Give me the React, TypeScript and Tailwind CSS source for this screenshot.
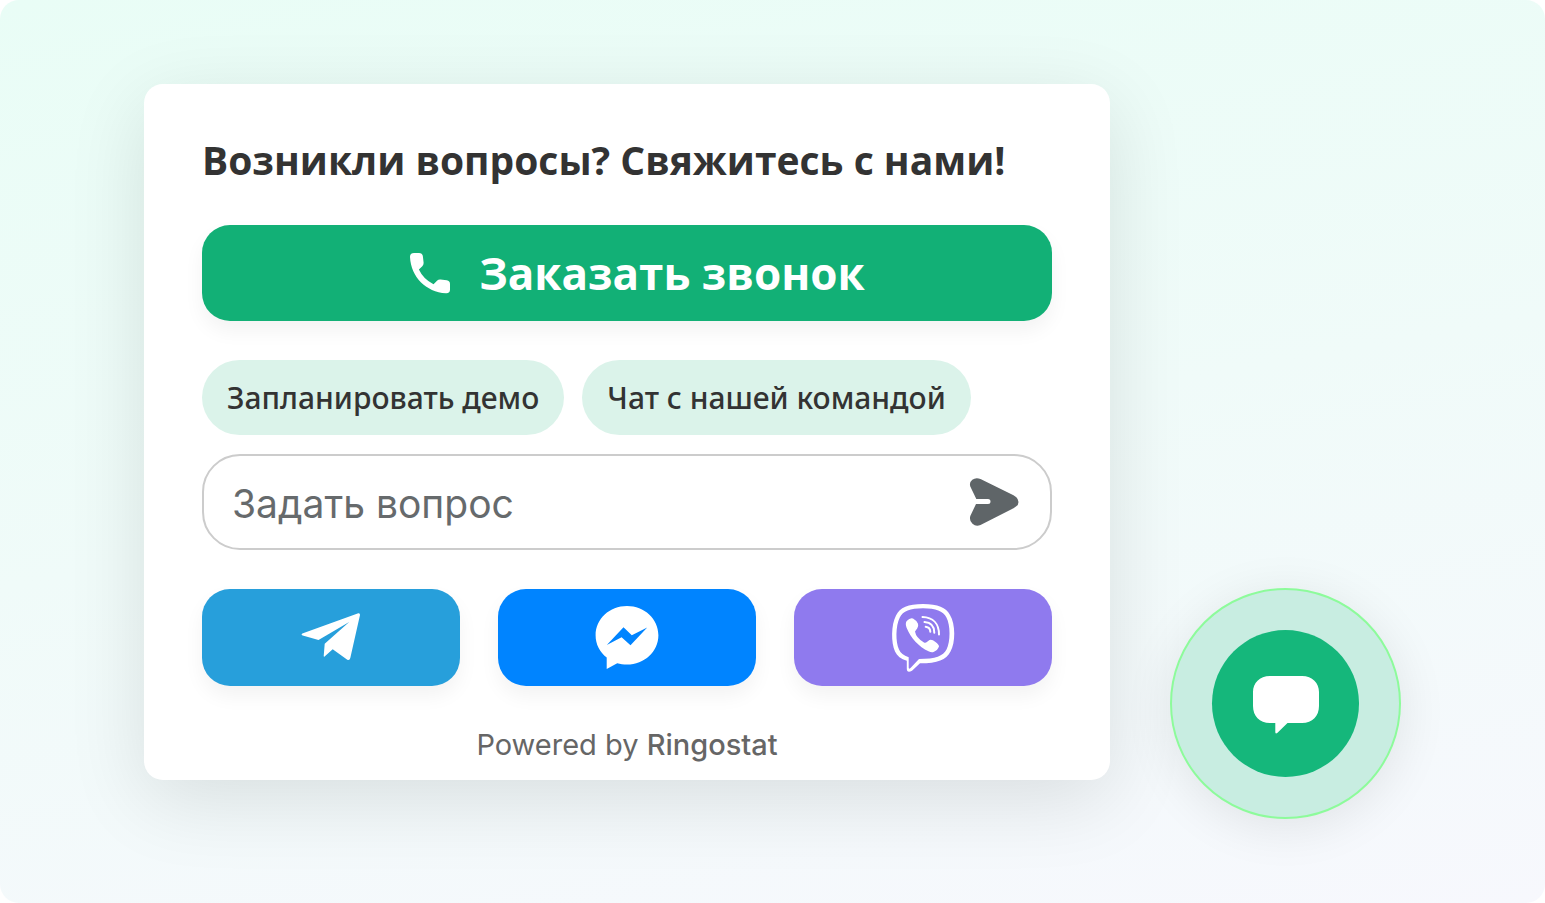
import { useState } from 'react';
import type { FormEvent, ReactNode } from 'react';

const TOPICS = ['Запланировать демо', 'Чат с нашей командой'];

function PhoneIcon() {
  return (
    <svg viewBox="0 0 42 42" className="size-[42px]" fill="#fff">
      <path d="M5 1H10Q13.500 1 13.900 4.500L14.600 10.500Q14.800 12.700 13.300 14.200L9.900 17.600Q14.500 27.500 24.500 32.200L28 28.700Q29.500 27.400 31.500 27.600L37.800 28.300Q41 28.800 41 32V37.500Q41 41.500 37 41.300C17 40 2 25 1 5Q.9 1 5 1Z" />
    </svg>
  );
}

function SendIcon() {
  return (
    <svg viewBox="0 0 50 50" className="size-[50px]" fill="#5f6568">
      <path d="M11.5 1.9 44.5 18.3Q49.5 21 49.5 25T44.5 31.2L11.5 47.9Q7 49.8 3.5 46.8T1.3 39L7 27H19a2.5 2.5 0 0 0 0-5H7.300L1.300 9.500Q0 5.500 3.300 2.800T11.500 1.900Z" />
    </svg>
  );
}

function TelegramIcon() {
  return (
    <svg viewBox="-4 -2 110 100" className="h-[100px] w-[110px]" fill="#fff">
      <path d="M78.300 23.200Q80.200 22.900 80 25L70.300 68Q69.600 70.800 67.300 69.700L52.700 59.300 44.600 66.600Q43.800 67.200 43.700 66L44.700 53.700 69.200 32 38.500 50 22.700 45.600Q20.300 44.300 23 43.200Z" />
    </svg>
  );
}

function MessengerIcon() {
  return (
    <svg viewBox="2 -2 110 100" className="h-[100px] w-[110px]">
      <path
        fill="#fff"
        d="M57 16C39.600 16 25.600 28.800 25.600 45.200c0 9.200 4.200 17 11.100 22.300V79l10.500-5.800c3 .9 6.300 1.300 9.800 1.300 17.400 0 31.400-12.900 31.400-29.300S74.400 16 57 16Z"
      />
      <path
        fill="#0084ff"
        d="M36.800 54.900 53.500 37.200 61.800 45.200 77.200 37.500 60.500 55.200 51.600 47.300Z"
      />
    </svg>
  );
}

function ViberIcon() {
  return (
    <svg viewBox="-2 -2 110 100" className="h-[100px] w-[110px]" fill="none">
      <path
        fill="#fff"
        fillRule="evenodd"
        d="M53 14C68 14 76 17.500 80 25C85.600 34 85.600 53 80.500 61.500C76 70 68 73.300 50 73.300L42 80.800Q36.800 83.500 36.800 78.500V70.800C31 69 27 66 25 61.500C21 52.500 21 35 26 25.500C30 17.500 38 14 53 14ZM53 18.300C66 18.300 73 21 76.300 27.300C80.600 35 80.600 52 76.500 59.500C73 66 66 69 49 69L40.500 78Q38.700 79.500 38.700 77.500V67.200C33.500 65.500 30.500 63 29 59.500C25.500 52 25.500 36 29.800 27.500C33 21 40 18.300 53 18.300Z"
      />
      <path
        fill="#fff"
        d="M36.700 31Q40 27.500 43 28.500Q46 30 48 33.800Q48.700 36 47.300 38.300L45 41.500Q46 47.800 54 52.500Q55.500 53.300 57.200 51.800L59.500 50Q62 49.200 65.500 52Q69 54.500 69 56.500Q67.500 60.500 63.500 62Q61.500 62.700 58.500 61.300C49 56.800 40.500 48 36.500 37.500Q35 33.500 36.700 31Z"
      />
      <g stroke="#fff" strokeWidth="2" strokeLinecap="round">
        <path d="M52.500 27C63 27.300 69 33.800 69 44.500" />
        <path d="M54.500 32C60.800 32.500 64.300 36.500 64.300 42.700" />
        <path d="M55.700 36.800C58.600 37.200 60.300 39 60.300 41.800" />
      </g>
    </svg>
  );
}

function ChatBubbleIcon() {
  return (
    <svg viewBox="0 0 68 60" className="h-[60px] w-[68px]" fill="#fff">
      <path d="M18 2H50C60.500 2 67 9 67 18V32C67 42 60.500 49 50 49H35.500L25.500 58.700Q23.300 60.500 23.300 58V49H18C7.500 49 1 42 1 32V18C1 9 7.500 2 18 2Z" />
    </svg>
  );
}

type SocialLinkProps = {
  label: string;
  className: string;
  children: ReactNode;
};

function SocialLink({ label, className, children }: SocialLinkProps) {
  return (
    <a
      href="#"
      aria-label={label}
      className={`flex h-[97px] flex-1 items-center justify-center overflow-hidden rounded-[28px] shadow-[0_10px_20px_rgba(0,0,0,0.05)] ${className}`}
    >
      {children}
    </a>
  );
}

function ContactCard() {
  const [question, setQuestion] = useState('');

  const onSubmit = (e: FormEvent) => {
    e.preventDefault();
    setQuestion('');
  };

  return (
    <section className="min-w-0 flex-1 self-start rounded-[19px] bg-white px-[58px] pt-12 pb-[15px] shadow-[0_20px_80px_rgba(0,0,0,0.11)]">
      <h1 className="text-[39px] leading-[56px] font-bold text-[#333]">
        Возникли вопросы? Свяжитесь с нами!
      </h1>
      <button
        type="button"
        className="mt-[37px] flex h-24 w-full items-center justify-center gap-7 rounded-[28px] bg-[#12b076] pl-5 text-[44px] font-bold text-white shadow-[0_10px_20px_rgba(0,0,0,0.05)]"
      >
        <PhoneIcon />
        Заказать звонок
      </button>
      <div className="mt-[39px] flex flex-wrap gap-[18px]">
        {TOPICS.map((topic) => (
          <button
            key={topic}
            type="button"
            onClick={() => setQuestion(topic)}
            className="h-[75px] rounded-full bg-[#dbf3ea] px-[25px] font-['Noto_Sans',sans-serif] text-[30px] font-medium text-[#333]"
          >
            {topic}
          </button>
        ))}
      </div>
      <form
        onSubmit={onSubmit}
        className="mt-[19px] flex h-24 items-center rounded-[38px] border-2 border-[#ccc] pr-[31px] pl-7"
      >
        <input
          type="text"
          aria-label="Задать вопрос"
          placeholder="Задать вопрос"
          value={question}
          onChange={(e) => setQuestion(e.target.value)}
          className="h-full min-w-0 flex-1 bg-transparent pt-0.5 font-['Inter',sans-serif] text-[39px] text-[#333] outline-none placeholder:text-[#666a6c]"
        />
        <button type="submit" aria-label="Отправить">
          <SendIcon />
        </button>
      </form>
      <div className="mt-[39px] flex gap-[38px]">
        <SocialLink label="Telegram" className="bg-[#279fdb]">
          <TelegramIcon />
        </SocialLink>
        <SocialLink label="Messenger" className="bg-[#0084ff]">
          <MessengerIcon />
        </SocialLink>
        <SocialLink label="Viber" className="bg-[#8f7aee]">
          <ViberIcon />
        </SocialLink>
      </div>
      <p className="mt-[39px] text-center font-['Inter',sans-serif] text-[29px] leading-10 text-[#666]">
        Powered by <span className="font-medium">Ringostat</span>
      </p>
    </section>
  );
}

export default function App() {
  return (
    <div className="bg-white">
      <main className="flex min-h-screen gap-15 rounded-[19px] bg-linear-170 from-[#e9fdf6] via-[#f0fbf9] to-[#f7f8fd] px-36 py-21 font-['Open_Sans',sans-serif]">
        <ContactCard />
        <button
          type="button"
          aria-label="Открыть чат"
          className="flex size-[231px] shrink-0 items-center justify-center self-end rounded-full border-2 border-[#8dfb9b] bg-[#c8ede1] shadow-[0_8px_50px_rgba(0,0,0,0.09)]"
        >
          <span className="flex size-[147px] items-center justify-center rounded-full bg-[#15b77b]">
            <ChatBubbleIcon />
          </span>
        </button>
      </main>
    </div>
  );
}
